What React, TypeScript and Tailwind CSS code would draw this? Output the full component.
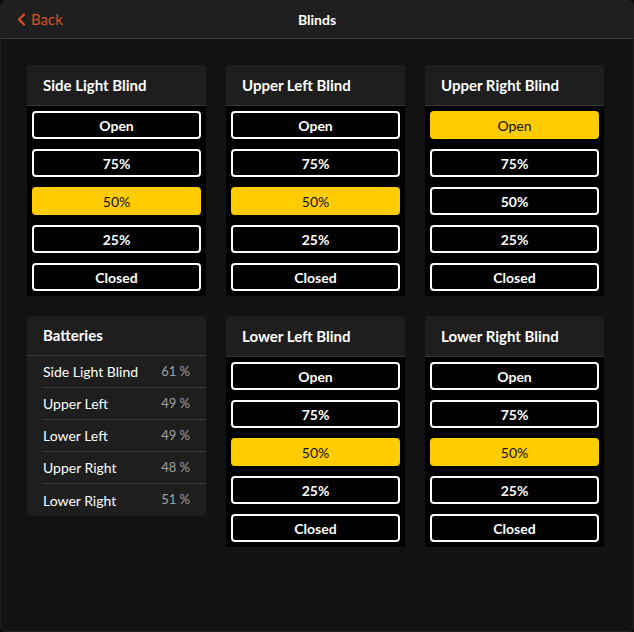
import React from "react";

const font = { fontFamily: "Lato, 'Liberation Sans', sans-serif" };

type BlindProps = { title: string; active: number };
const options = ["Open", "75%", "50%", "25%", "Closed"];

function BlindCard({ title, active }: BlindProps) {
  return (
    <div className="w-[179px] rounded-t-[4px] overflow-hidden">
      <div className="h-[41px] bg-[#1e1e1e] border-b border-[#3a3a3a] flex items-center px-4 text-white font-bold text-[15px]">
        {title}
      </div>
      <div className="bg-black px-[5px] pt-[5px] pb-[5px] flex flex-col gap-[10px]">
        {options.map((o, i) =>
          i === active ? (
            <div
              key={o}
              className="h-[28px] rounded-[4px] bg-[#ffcc00] text-[#111] text-[14px] flex items-center justify-center"
            >
              {o}
            </div>
          ) : (
            <div
              key={o}
              className="h-[28px] rounded-[4px] border-2 border-white text-white font-bold text-[14px] flex items-center justify-center"
            >
              {o}
            </div>
          )
        )}
      </div>
    </div>
  );
}

const batteries: [string, string][] = [
  ["Side Light Blind", "61 %"],
  ["Upper Left", "49 %"],
  ["Lower Left", "49 %"],
  ["Upper Right", "48 %"],
  ["Lower Right", "51 %"],
];

function BatteryCard() {
  return (
    <div className="w-[179px] rounded-[4px] bg-[#1e1e1e] self-start">
      <div className="h-[40px] border-b border-[#3a3a3a] flex items-center px-4 text-white font-bold text-[15px]">
        Batteries
      </div>
      <div className="pl-4">
        {batteries.map(([n, v], i) => (
          <div
            key={n}
            className={`h-[32px] flex items-center justify-between pr-4 ${
              i < batteries.length - 1 ? "border-b border-[#3a3a3a]" : ""
            }`}
          >
            <span className="text-white text-[14px]">{n}</span>
            <span className="text-[#a0a0a0] text-[13px]">{v}</span>
          </div>
        ))}
      </div>
    </div>
  );
}

export default function App() {
  return (
    <div className="w-[634px] h-[632px] bg-[#0a0a0a]" style={font}>
      <div className="w-full h-full rounded-[6px] border border-[#222] bg-[#121212] overflow-hidden flex flex-col">
        <div className="h-[38px] shrink-0 bg-[#1f1f1f] border-b border-[#3c3c3c] relative flex items-center justify-center">
          <div className="absolute left-[16px] top-0 h-full flex items-center gap-[5px] text-[#d9501e] text-[15px]">
            <svg width="9" height="13" viewBox="0 0 9 13" fill="none">
              <path d="M7 1.5L2 6.5L7 11.5" stroke="#d9501e" strokeWidth="2.2" strokeLinecap="round" strokeLinejoin="round" />
            </svg>
            <span>Back</span>
          </div>
          <span className="text-white font-bold text-[14px]">Blinds</span>
        </div>
        <div className="pl-[26px] pt-[26px] grid grid-cols-[179px_179px_179px] gap-x-[20px] gap-y-[20px] items-start">
          <BlindCard title="Side Light Blind" active={2} />
          <BlindCard title="Upper Left Blind" active={2} />
          <BlindCard title="Upper Right Blind" active={0} />
          <BatteryCard />
          <BlindCard title="Lower Left Blind" active={2} />
          <BlindCard title="Lower Right Blind" active={2} />
        </div>
      </div>
    </div>
  );
}
